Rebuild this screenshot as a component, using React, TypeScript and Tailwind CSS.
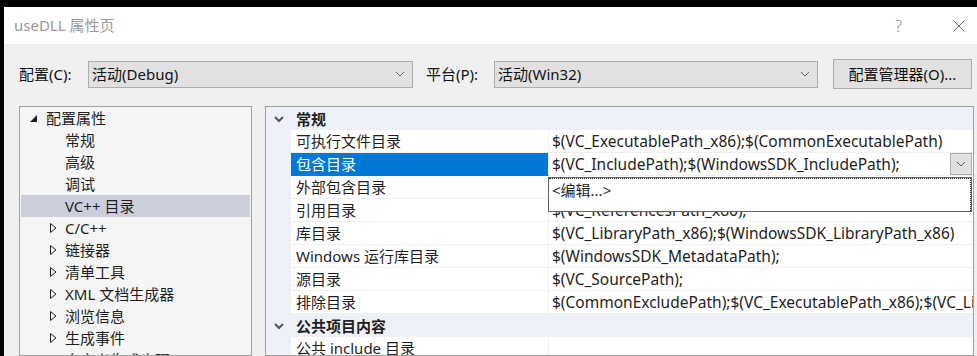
const FONT = "font-['Segoe_UI','Noto_Sans','Noto_Sans_CJK_SC',sans-serif]";

const tree = [
  { label: "常规", kind: "leaf" },
  { label: "高级", kind: "leaf" },
  { label: "调试", kind: "leaf" },
  { label: "VC++ 目录", kind: "leaf", selected: true },
  { label: "C/C++", kind: "node" },
  { label: "链接器", kind: "node" },
  { label: "清单工具", kind: "node" },
  { label: "XML 文档生成器", kind: "node" },
  { label: "浏览信息", kind: "node" },
  { label: "生成事件", kind: "node" },
  { label: "自定义生成步骤", kind: "node" },
];

type Row =
  | { type: "section"; label: string }
  | { type: "prop"; name: string; value: string; selected?: boolean };

const rows: Row[] = [
  { type: "section", label: "常规" },
  { type: "prop", name: "可执行文件目录", value: "$(VC_ExecutablePath_x86);$(CommonExecutablePath)" },
  { type: "prop", name: "包含目录", value: "$(VC_IncludePath);$(WindowsSDK_IncludePath);", selected: true },
  { type: "prop", name: "外部包含目录", value: "$(VC_IncludePath);$(WindowsSDK_IncludePath);" },
  { type: "prop", name: "引用目录", value: "$(VC_ReferencesPath_x86);" },
  { type: "prop", name: "库目录", value: "$(VC_LibraryPath_x86);$(WindowsSDK_LibraryPath_x86)" },
  { type: "prop", name: "Windows 运行库目录", value: "$(WindowsSDK_MetadataPath);" },
  { type: "prop", name: "源目录", value: "$(VC_SourcePath);" },
  { type: "prop", name: "排除目录", value: "$(CommonExcludePath);$(VC_ExecutablePath_x86);$(VC_LibraryPath_x86)" },
  { type: "section", label: "公共项目内容" },
  { type: "prop", name: "公共 include 目录", value: "" },
];

function Chevron({ className = "" }: { className?: string }) {
  return (
    <svg width="10" height="6" viewBox="0 0 10 6" className={className}>
      <polyline points="1,1 5,5 9,1" fill="none" stroke="currentColor" strokeWidth="1" />
    </svg>
  );
}

function Select({ value, width }: { value: string; width: string }) {
  return (
    <div className={`${width} h-[27px] flex items-center justify-between border border-[#adadad] bg-[#e1e1e1] pl-[3px] pr-[7px] text-[15px] text-[#111]`}>
      <span>{value}</span>
      <Chevron className="text-[#666]" />
    </div>
  );
}

export default function App() {
  return (
    <div className={`w-[977px] h-[356px] bg-black pt-[7px] pl-[4px] overflow-hidden ${FONT}`}>
      <div className="w-full h-full bg-[#f0f0f0] flex flex-col overflow-hidden">
        {/* title bar */}
        <div className="h-[37px] shrink-0 bg-white flex items-center pl-[10px] pr-[12px]">
          <span className="text-[15px] text-[#999] flex-1">useDLL 属性页</span>
          <span className="text-[16px] text-[#888] font-light mr-[51px]">?</span>
          <svg width="12" height="12" viewBox="0 0 12 12" className="text-[#666]">
            <line x1="0.5" y1="0.5" x2="11.5" y2="11.5" stroke="currentColor" strokeWidth="1" />
            <line x1="11.5" y1="0.5" x2="0.5" y2="11.5" stroke="currentColor" strokeWidth="1" />
          </svg>
        </div>

        {/* config row */}
        <div className="shrink-0 flex items-center h-[30px] mt-[15px] pl-[15px] text-[15px] text-[#111]">
          <span className="w-[69px]">配置(C):</span>
          <Select value="活动(Debug)" width="w-[325px]" />
          <span className="ml-[13px] w-[68px]">平台(P):</span>
          <Select value="活动(Win32)" width="w-[324px]" />
          <div className="ml-[15px] w-[139px] h-[30px] border border-[#adadad] bg-[#e1e1e1] flex items-center justify-center">
            配置管理器(O)...
          </div>
        </div>

        {/* panels */}
        <div className="flex-1 flex pl-[15px] mt-[17px] gap-[13px] min-h-0">
          {/* tree */}
          <div className="w-[233px] shrink-0 border border-[#a0a0a0] bg-[#f5f5f5] text-[15px] text-[#1e1e1e] overflow-hidden">
            <div className="h-[22px] flex items-center pl-[10px]">
              <svg width="7" height="7" viewBox="0 0 7 7" className="mr-[9px]">
                <polygon points="7,0 7,7 0,7" fill="#1e1e1e" />
              </svg>
              <span>配置属性</span>
            </div>
            {tree.map((t) => (
              <div
                key={t.label}
                className={`h-[22px] flex items-center pl-[29px] mx-px ${t.selected ? "bg-[#cccedb]" : ""}`}
              >
                {t.kind === "node" ? (
                  <svg width="7" height="10" viewBox="0 0 7 10" className="mr-[8px]">
                    <polygon points="0.5,0.5 6,5 0.5,9.5" fill="none" stroke="#1e1e1e" strokeWidth="1" />
                  </svg>
                ) : (
                  <span className="w-[15px]" />
                )}
                <span>{t.label}</span>
              </div>
            ))}
          </div>

          {/* property grid */}
          <div className="w-[709px] shrink-0 border border-[#a0a0a0] bg-white text-[15px] text-[#1e1e1e] relative overflow-hidden">
            {rows.map((r, i) =>
              r.type === "section" ? (
                <div key={i} className="h-[23px] flex items-center pt-px bg-[#eef2f8]">
                  <div className="w-[25px] flex justify-center">
                    <svg width="10" height="7" viewBox="0 0 10 7" className="text-[#555]">
                      <polyline points="1,1 5,5 9,1" fill="none" stroke="currentColor" strokeWidth="2" />
                    </svg>
                  </div>
                  <span className="pl-[5px] font-bold">{r.label}</span>
                </div>
              ) : (
                <div key={i} className="h-[23px] flex">
                  <div className="w-[25px] shrink-0 bg-[#eef2f8]" />
                  <div
                    className={`w-[258px] shrink-0 pl-[5px] pt-px leading-[21px] border-b border-r border-[#f0f0f0] whitespace-nowrap ${
                      r.selected ? "bg-[#0078d7] text-white border-b-[#0078d7]" : ""
                    }`}
                  >
                    {r.name}
                  </div>
                  <div className="flex-1 flex items-start pl-[3px] border-b border-[#f0f0f0] whitespace-nowrap overflow-hidden">
                    <span className="flex-1 overflow-hidden pt-px leading-[21px] text-[15.5px]">{r.value}</span>
                    {r.selected && (
                      <div className="w-[22px] h-[22px] mr-[1px] shrink-0 border border-[#adadad] bg-[#e1e1e1] flex items-center justify-center">
                        <Chevron className="text-[#555]" />
                      </div>
                    )}
                  </div>
                </div>
              )
            )}

            {/* dropdown popup */}
            <div className="absolute left-[282px] top-[70px] w-[424px] h-[35px] border border-[#646464] bg-white">
              <div className="h-full border-t border-r border-dotted border-[#222] pl-[3px] leading-[22px]">
                &lt;编辑...&gt;
              </div>
            </div>
          </div>
        </div>
      </div>
    </div>
  );
}
